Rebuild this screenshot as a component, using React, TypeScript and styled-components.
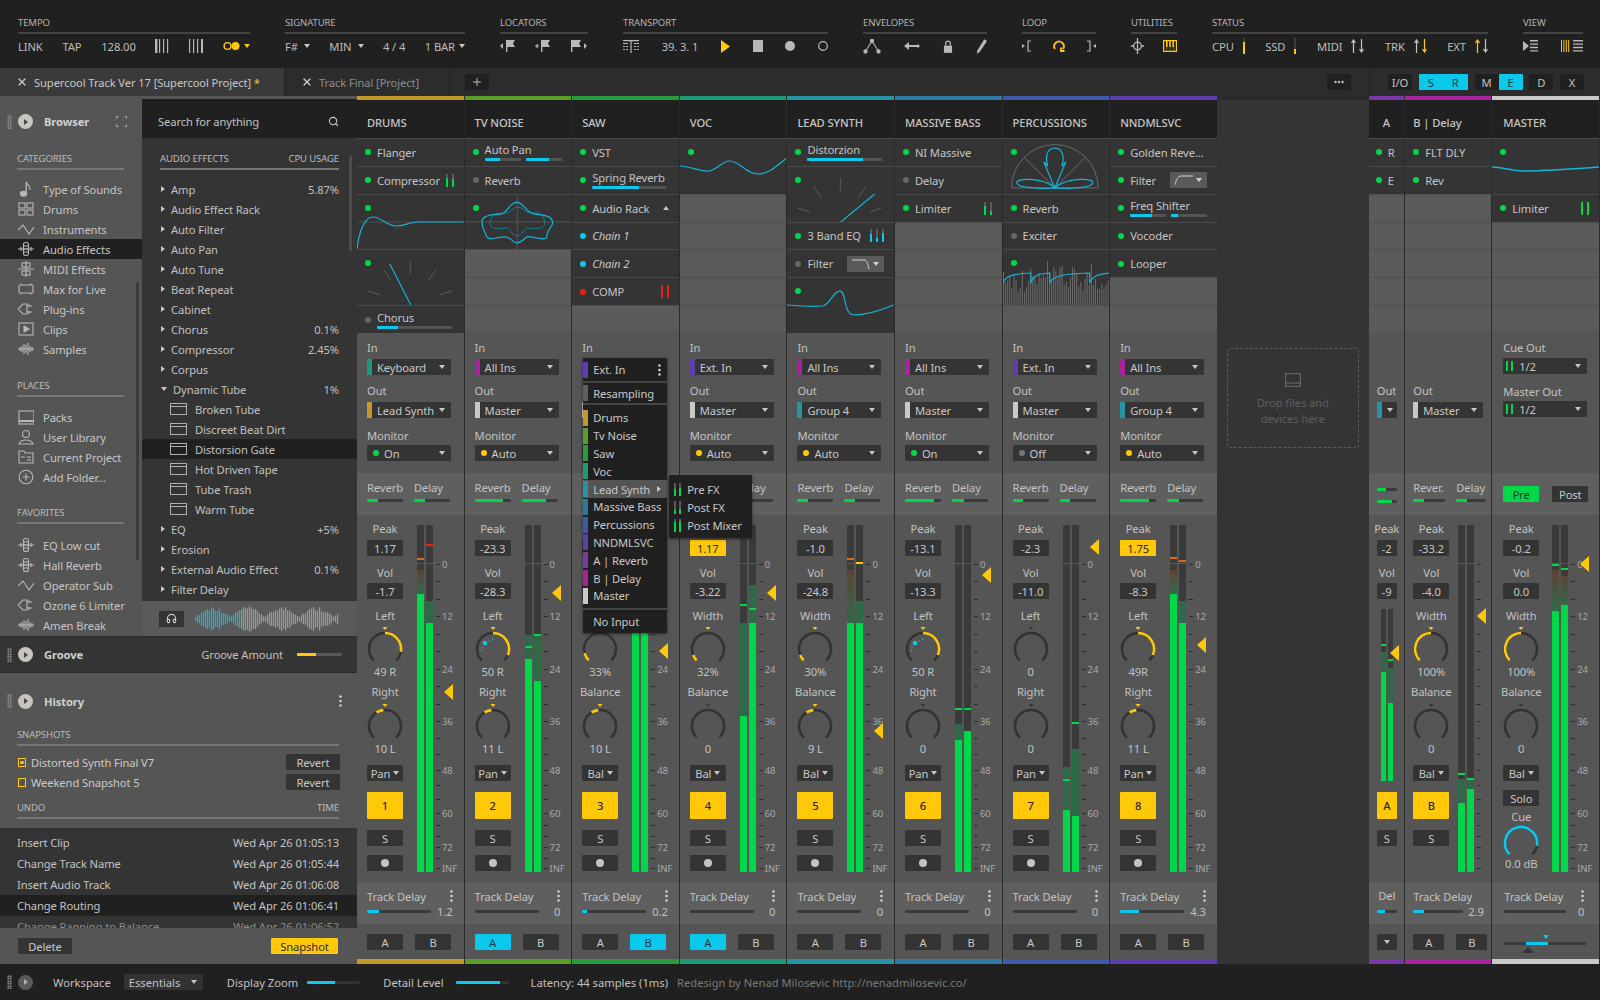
import React from "react";
import styled, { createGlobalStyle } from "styled-components";
import { Headphones, Search, X, Plus, Ellipsis } from "lucide-react";

const GREEN = "#00d84a";
const CYAN = "#0cc8ec";
const YELLOW = "#ffc90a";
const RED = "#f01d10";
const PANEL = "#555555";
const BAND = "#5f5f5f";
const DARK = "#343434";
const BLACK = "#202020";
const TEXT = "#c6c6c6";

const COLORS = {
  drums: "#c39a27",
  tv: "#5a9e2a",
  saw: "#2a9a3a",
  voc: "#1f9a78",
  lead: "#2595a3",
  massive: "#2e78a5",
  perc: "#3f5aa8",
  nnd: "#5c3faa",
  a: "#7b36a8",
  b: "#a8249c",
  master: "#c8c8c8",
};

const GlobalStyle = createGlobalStyle`
  html, body {
    margin: 0;
    padding: 0;
    background: ${BLACK};
  }
  * {
    box-sizing: border-box;
  }
  body {
    font-family: "Noto Sans", "Open Sans", sans-serif;
    font-size: 11.2px;
    letter-spacing: -0.1px;
    color: ${TEXT};
  }
`;

const Page = styled.div`
  width: 1600px;
  height: 1000px;
  display: flex;
  flex-direction: column;
  overflow: hidden;
  background: ${BLACK};
`;

/* top bar */

const TopBar = styled.div`
  height: 68px;
  padding: 16px 0 0 18px;
  display: flex;
  gap: 35px;
  background: ${BLACK};
`;

const Group = styled.div<{ $w: number }>`
  width: ${({ $w }) => $w}px;
`;

const GroupLabel = styled.div`
  height: 14px;
  line-height: 14px;
  font-size: 9.5px;
  color: #b4b4b4;
`;

const Rule = styled.div`
  height: 2px;
  margin-top: 2px;
  background: #444;
`;

const GroupRow = styled.div`
  height: 20px;
  margin-top: 2px;
  display: flex;
  align-items: center;
  justify-content: space-between;
  color: #bdbdbd;
`;

const Inline = styled.span<{ $gap?: number }>`
  display: inline-flex;
  align-items: center;
  gap: ${({ $gap }) => $gap ?? 6}px;
`;

const Caret = styled.i<{ $c?: string; $dir?: "up" | "right" }>`
  display: inline-block;
  flex: none;
  width: 0;
  height: 0;
  ${({ $dir, $c }) =>
    $dir === "right"
      ? `border-top: 3px solid transparent; border-bottom: 3px solid transparent; border-left: 4px solid ${$c ?? "#c6c6c6"};`
      : $dir === "up"
        ? `border-left: 3.5px solid transparent; border-right: 3.5px solid transparent; border-bottom: 4px solid ${$c ?? "#c6c6c6"};`
        : `border-left: 3.5px solid transparent; border-right: 3.5px solid transparent; border-top: 4px solid ${$c ?? "#c6c6c6"};`}
`;

const Ico = styled.svg<{ $c?: string }>`
  display: block;
  flex: none;
  color: ${({ $c }) => $c ?? "#b8b8b8"};
`;

const BarsIcon = ({ weights }: { weights: number[] }) => (
  <Ico width="14" height="14" viewBox="0 0 14 14" fill="currentColor">
    {weights.map((w, i) => (
      <rect key={i} x={i * 4} y="0" width={w} height="14" />
    ))}
  </Ico>
);

const Flag = ({ mode }: { mode: "prev" | "add" | "next" }) => (
  <Ico width="18" height="14" viewBox="0 0 18 14" fill="currentColor">
    {mode === "prev" && <path d="M3 4v6L0 7z" />}
    {mode === "add" && <path d="M0 6.4h4v1.2H0zM1.4 5h1.2v4H1.4z" />}
    <path d={mode === "next" ? "M1 1h1.4v12H1zM2.4 1H11L9 4.5 11 8H2.4z" : "M6 1h1.4v12H6zM7.4 1H15l-2 3.5L15 8H7.4z"} />
    {mode === "next" && <path d="M14 4v6l3-3z" />}
  </Ico>
);

const ArrowPair = ({ up, down }: { up: string; down: string }) => (
  <Inline $gap={3}>
    <Ico $c={up} width="5" height="14" viewBox="0 0 5 14" fill="none" stroke="currentColor" strokeWidth="1.2">
      <path d="M2.5 14V1M.5 4l2-3 2 3" />
    </Ico>
    <Ico $c={down} width="5" height="14" viewBox="0 0 5 14" fill="none" stroke="currentColor" strokeWidth="1.2">
      <path d="M2.5 0v13M.5 10l2 3 2-3" />
    </Ico>
  </Inline>
);

const LoadBar = styled.i<{ $fill: number }>`
  display: block;
  width: 2px;
  height: 16px;
  background: linear-gradient(to top, ${YELLOW} ${({ $fill }) => $fill}%, #3c3c3c ${({ $fill }) => $fill}%);
`;

const TopBarSection = () => (
  <TopBar>
    <Group $w={232}>
      <GroupLabel>TEMPO</GroupLabel>
      <Rule />
      <GroupRow>
        <span>LINK</span>
        <span>TAP</span>
        <span>128.00</span>
        <BarsIcon weights={[2.4, 1.2, 1.2, 1.2]} />
        <BarsIcon weights={[1.2, 1.2, 1.2, 2.4]} />
        <Inline $gap={4}>
          <Ico $c={YELLOW} width="17" height="10" viewBox="0 0 17 10">
            <circle cx="4.5" cy="5" r="3.4" fill="none" stroke="currentColor" strokeWidth="1.4" />
            <circle cx="12.5" cy="5" r="4" fill="currentColor" />
          </Ico>
          <Caret $c={YELLOW} />
        </Inline>
      </GroupRow>
    </Group>
    <Group $w={180}>
      <GroupLabel>SIGNATURE</GroupLabel>
      <Rule />
      <GroupRow>
        <Inline>F# <Caret /></Inline>
        <Inline>MIN <Caret /></Inline>
        <span>4 / 4</span>
        <Inline $gap={4}>1 BAR <Caret /></Inline>
      </GroupRow>
    </Group>
    <Group $w={88}>
      <GroupLabel>LOCATORS</GroupLabel>
      <Rule />
      <GroupRow>
        <Flag mode="prev" />
        <Flag mode="add" />
        <Flag mode="next" />
      </GroupRow>
    </Group>
    <Group $w={205}>
      <GroupLabel>TRANSPORT</GroupLabel>
      <Rule />
      <GroupRow>
        <Ico width="16" height="14" viewBox="0 0 16 14" fill="currentColor">
          <path d="M0 1h16v1.2H0zM7.4 2h1.2v12H7.4zM0 4h5v1H0zM11 4h5v1h-5zM0 7h2v1H0zM3 7h2v1H3zM11 7h2v1h-2zM14 7h2v1h-2zM0 10h2v1H0zM3 10h2v1H3zM11 10h2v1h-2zM14 10h2v1h-2z" />
        </Ico>
        <span>39. 3. 1</span>
        <Ico $c={YELLOW} width="9" height="13" viewBox="0 0 9 13" fill="currentColor">
          <path d="M0 0l9 6.5L0 13z" />
        </Ico>
        <Ico width="10" height="12" viewBox="0 0 10 12" fill="currentColor">
          <rect width="10" height="12" />
        </Ico>
        <Ico width="10" height="10" viewBox="0 0 10 10" fill="currentColor">
          <circle cx="5" cy="5" r="5" />
        </Ico>
        <Ico width="10" height="12" viewBox="0 0 10 12" fill="none" stroke="currentColor" strokeWidth="1.2">
          <circle cx="5" cy="6" r="4.3" />
        </Ico>
      </GroupRow>
    </Group>
    <Group $w={124}>
      <GroupLabel>ENVELOPES</GroupLabel>
      <Rule />
      <GroupRow>
        <Ico width="18" height="16" viewBox="0 0 18 16" fill="none" stroke="currentColor" strokeWidth="1.1">
          <path d="M2 14L9 3l7 11" />
          <circle cx="2.5" cy="13.5" r="1.6" fill="currentColor" />
          <circle cx="9" cy="3" r="1.6" fill="currentColor" />
          <circle cx="15.5" cy="13.5" r="1.6" fill="currentColor" />
        </Ico>
        <Ico width="16" height="12" viewBox="0 0 16 12" fill="currentColor">
          <path d="M0 6l5-4v3h8v2H5v3z" />
          <circle cx="14" cy="6" r="1.6" />
        </Ico>
        <Ico width="10" height="13" viewBox="0 0 11 14" fill="currentColor">
          <path d="M1 6h9v8H1z" />
          <path d="M3 6V3.5a2.5 2.5 0 0 1 5 0V6" fill="none" stroke="currentColor" strokeWidth="1.4" />
        </Ico>
        <Ico width="11" height="15" viewBox="0 0 12 16" fill="currentColor">
          <path d="M9 0l3 2-8 12-3 2 .3-3.5z" />
        </Ico>
      </GroupRow>
    </Group>
    <Group $w={74}>
      <GroupLabel>LOOP</GroupLabel>
      <Rule />
      <GroupRow>
        <Ico width="10" height="12" viewBox="0 0 10 12" fill="none" stroke="currentColor" strokeWidth="1.2">
          <path d="M0 4v4l3-2z" fill="currentColor" stroke="none" />
          <path d="M9 1H6v10h3" />
        </Ico>
        <Ico $c={YELLOW} width="14" height="13" viewBox="0 0 14 13" fill="none" stroke="currentColor" strokeWidth="1.8">
          <path d="M3 9A4.8 4.8 0 1 1 11 9M9 7.5V11h3.5" />
        </Ico>
        <Ico width="10" height="12" viewBox="0 0 10 12" fill="none" stroke="currentColor" strokeWidth="1.2">
          <path d="M10 4v4L7 6z" fill="currentColor" stroke="none" />
          <path d="M1 1h3v10H1" />
        </Ico>
      </GroupRow>
    </Group>
    <Group $w={46}>
      <GroupLabel>UTILITIES</GroupLabel>
      <Rule />
      <GroupRow>
        <Ico width="13" height="16" viewBox="0 0 13 16" fill="none" stroke="currentColor" strokeWidth="1.3">
          <path d="M6.5 0v16M0 8h3M10 8h3" />
          <circle cx="6.5" cy="8" r="3.8" />
        </Ico>
        <Ico $c={YELLOW} width="14" height="14" viewBox="0 0 14 14" fill="currentColor">
          <path d="M0 1h14v12H0zm1.2 1.2v9.6h11.6V2.200z" fillRule="evenodd" />
          <path d="M3 2h1.6v6H3zM6.200 2h1.600v6H6.200zM9.400 2h1.600v6H9.400zM3.700 8h.4v4h-.4zM6.800 8h.4v4h-.4zM10 8h.4v4H10z" />
        </Ico>
      </GroupRow>
    </Group>
    <Group $w={276}>
      <GroupLabel>STATUS</GroupLabel>
      <Rule />
      <GroupRow>
        <Inline $gap={9}>CPU <LoadBar $fill={75} /></Inline>
        <Inline $gap={9}>SSD <LoadBar $fill={30} /></Inline>
        <Inline $gap={9}>MIDI <ArrowPair up="#c6c6c6" down="#c6c6c6" /></Inline>
        <Inline $gap={9}>TRK <ArrowPair up="#c6c6c6" down={YELLOW} /></Inline>
        <Inline $gap={9}>EXT <ArrowPair up={YELLOW} down="#c6c6c6" /></Inline>
      </GroupRow>
    </Group>
    <Group $w={60}>
      <GroupLabel>VIEW</GroupLabel>
      <Rule />
      <GroupRow>
        <Ico width="15" height="12" viewBox="0 0 15 12" fill="currentColor">
          <path d="M0 1l6 5-6 5zM7 0h8v1.400H7zM7 3.400h8v1.400H7zM7 6.800h8v1.400H7zM7 10.200h8v1.400H7z" />
        </Ico>
        <Inline $gap={2}>
          <Ico $c={YELLOW} width="10" height="12" viewBox="0 0 10 12" fill="currentColor">
            <path d="M0 0h1v12H0zM2.400 0h1v12h-1zM4.800 0h1v12h-1zM7.200 0h1v12h-1z" />
          </Ico>
          <Ico width="10" height="12" viewBox="0 0 10 12" fill="currentColor">
            <path d="M0 0h10v1.400H0zM0 3.400h10v1.400H0zM0 6.800h10v1.400H0zM0 10.200h10v1.400H0z" />
          </Ico>
        </Inline>
      </GroupRow>
    </Group>
  </TopBar>
);

/* tabs */

const TabBar = styled.div`
  height: 28px;
  display: flex;
  align-items: stretch;
  background: #2c2c2c;
`;

const Tab = styled.div<{ $active?: boolean; $w: number }>`
  width: ${({ $w }) => $w}px;
  display: flex;
  align-items: center;
  gap: 6px;
  padding-left: 16px;
  border-right: 1px solid #222;
  background: ${({ $active }) => ($active ? "#3a3a3a" : "#2c2c2c")};
  color: ${({ $active }) => ($active ? "#c8c8c8" : "#8e8e8e")};
  white-space: nowrap;
`;

const TabStar = styled.span`
  color: ${YELLOW};
`;

const TabButton = styled.div<{ $on?: boolean; $w?: number }>`
  width: ${({ $w }) => $w ?? 24}px;
  height: 16px;
  display: flex;
  align-items: center;
  justify-content: center;
  background: ${({ $on }) => ($on ? CYAN : BLACK)};
  color: ${({ $on }) => ($on ? "#1d3a44" : "#c0c0c0")};
  border-radius: 1px;
`;

const TabSpacer = styled.div`
  flex: 1;
  display: flex;
  align-items: center;
  justify-content: flex-end;
  padding-right: 18px;
`;

const PlusWrap = styled.div`
  margin: 6px 0 0 15px;
`;

const ViewTabs = styled.div`
  width: 231px;
  padding: 0 16px 0 18px;
  display: flex;
  align-items: center;
  justify-content: space-between;
  border-left: 1px solid #222;
`;

const TwoUp = styled.div`
  width: 49px;
  height: 16px;
  display: flex;
  align-items: center;
  justify-content: space-around;
  background: ${CYAN};
  color: #1d3a44;
  border-radius: 1px;
`;

const Pair = styled.div`
  display: flex;
`;

const Tabs = () => (
  <TabBar>
    <Tab $active $w={285}>
      <X size={12} strokeWidth={2.4} color="#d0d0d0" />
      <span>
        Supercool Track Ver 17 [Supercool Project] <TabStar>*</TabStar>
      </span>
    </Tab>
    <Tab $w={165}>
      <X size={12} strokeWidth={2.4} color="#d0d0d0" />
      <span>Track Final [Project]</span>
    </Tab>
    <PlusWrap>
      <TabButton>
        <Plus size={12} />
      </TabButton>
    </PlusWrap>
    <TabSpacer>
      <TabButton>
        <Ellipsis size={12} strokeWidth={3} />
      </TabButton>
    </TabSpacer>
    <ViewTabs>
      <TabButton>I/O</TabButton>
      <TwoUp>
        <span>S</span>
        <span>R</span>
      </TwoUp>
      <Pair>
        <TabButton>M</TabButton>
        <TabButton $on>E</TabButton>
      </Pair>
      <TabButton>D</TabButton>
      <TabButton>X</TabButton>
    </ViewTabs>
  </TabBar>
);

/* sidebar */

const Main = styled.div`
  height: 868px;
  display: flex;
`;

const Sidebar = styled.div`
  width: 357px;
  flex: none;
  display: flex;
  flex-direction: column;
`;

const Browser = styled.div`
  height: 541px;
  display: flex;
  border-bottom: 1px solid #2a2a2a;
`;

const Categories = styled.div`
  width: 142px;
  flex: none;
  position: relative;
  background: ${PANEL};
`;

const PanelHead = styled.div<{ $h: number; $top?: number }>`
  height: ${({ $h }) => $h}px;
  display: flex;
  align-items: center;
  padding: ${({ $top }) => $top ?? 0}px 15px 0 7px;
  font-weight: 700;
  color: #d0d0d0;
`;

const Grip = styled.i`
  display: block;
  width: 5px;
  height: 14px;
  margin-right: 6px;
  background-image: radial-gradient(#8c8c8c 0.8px, transparent 1px);
  background-size: 2.5px 2.5px;
`;

const PlayDisc = styled.i<{ $dim?: boolean }>`
  width: 15px;
  height: 15px;
  margin-right: 11px;
  flex: none;
  display: flex;
  align-items: center;
  justify-content: center;
  border-radius: 50%;
  background: ${({ $dim }) => ($dim ? "#5a5a5a" : "#c8c4c0")};
  &::after {
    content: "";
    border-top: 3px solid transparent;
    border-bottom: 3px solid transparent;
    border-left: 4px solid ${({ $dim }) => ($dim ? "#b0b0b0" : "#444")};
    margin-left: 1px;
  }
`;

const PushRight = styled.div`
  margin-left: auto;
  display: flex;
  align-items: center;
  font-weight: 400;
`;

const SectionHead = styled.div<{ $mt: number; $x?: number; $r?: number }>`
  margin: ${({ $mt, $x, $r }) => `${$mt}px ${$r ?? 18}px 0 ${$x ?? 17}px`};
  height: 18px;
  display: flex;
  justify-content: space-between;
  align-items: flex-start;
  line-height: 14px;
  font-size: 9.5px;
  color: #bbb;
  border-bottom: 2px solid #777;
`;

const RowList = styled.div<{ $mt: number }>`
  margin-top: ${({ $mt }) => $mt}px;
`;

const CatRow = styled.div<{ $on?: boolean }>`
  height: 20px;
  display: flex;
  align-items: center;
  gap: 9px;
  padding-left: 18px;
  background: ${({ $on }) => ($on ? BLACK : "transparent")};
  color: #c6c6c6;
  white-space: nowrap;
`;

const SideScroll = styled.div`
  position: absolute;
  left: 136px;
  top: 186px;
  width: 3px;
  height: 278px;
  background: #3c3c3c;
  border-radius: 2px;
`;

const I16 = ({ children }: { children: React.ReactNode }) => (
  <Ico width="16" height="16" viewBox="0 0 16 16" fill="none" stroke="currentColor" strokeWidth="1.1">
    {children}
  </Ico>
);

const ICONS: Record<string, React.ReactNode> = {
  note: (
    <>
      <ellipse cx="5.500" cy="12.800" rx="3.200" ry="2.500" fill="currentColor" />
      <path d="M8.200 12V1c.6 3 4.500 3.500 3.800 8" strokeWidth="1.300" />
    </>
  ),
  grid: (
    <>
      <rect x="1" y="2" width="6" height="5" />
      <rect x="9" y="2" width="6" height="5" />
      <rect x="1" y="9" width="6" height="5" />
      <rect x="9" y="9" width="6" height="5" />
    </>
  ),
  wave: <path d="M0 9l5-5 6 9 5-7" />,
  fx: (
    <>
      <path d="M0 8h16M3 6v4M13 6v4" />
      <rect x="5.500" y="1.500" width="5" height="13" rx="2" />
      <path d="M5.500 5h5M5.500 8h5M5.500 11h5" />
    </>
  ),
  midi: (
    <>
      <path d="M0 8h16M8 0v16" />
      <rect x="4" y="2" width="8" height="4" />
      <rect x="4" y="10" width="8" height="4" />
    </>
  ),
  max: (
    <>
      <rect x="1" y="4" width="14" height="8" rx="1" />
      <path d="M3 4V2.500M13 4V2.500M3 12v1.500M13 12v1.500" />
    </>
  ),
  plug: <path d="M0 8l5-5h4v10H5zM9 5h5M9 11h5M11 3v3M11 10v3" />,
  clip: (
    <>
      <rect x="1" y="2" width="14" height="12" />
      <path d="M6 5l5 3-5 3z" fill="currentColor" />
    </>
  ),
  samples: <path d="M0 8h16M2 6v4M4 5v6M6 3v10M8 4v8M10 2v12M12 5v6M14 6v4" />,
  packs: (
    <>
      <rect x="1" y="2" width="15" height="13" />
      <path d="M1 12h15" strokeWidth="2" />
    </>
  ),
  user: (
    <>
      <circle cx="8" cy="5" r="3.500" />
      <path d="M1 15c1-3 3-4 7-4s6 1 7 4z" />
    </>
  ),
  folder: <path d="M1 2h5l1 2h8v10H1zM9 8h4M9 11h4M3 8h4" />,
  add: (
    <>
      <circle cx="8" cy="8" r="6.800" />
      <path d="M8 4.500v7M4.500 8h7" />
    </>
  ),
};

const CATS: [string, string][] = [
  ["note", "Type of Sounds"],
  ["grid", "Drums"],
  ["wave", "Instruments"],
  ["fx", "Audio Effects"],
  ["midi", "MIDI Effects"],
  ["max", "Max for Live"],
  ["plug", "Plug-ins"],
  ["clip", "Clips"],
  ["samples", "Samples"],
];
const PLACES: [string, string][] = [
  ["packs", "Packs"],
  ["user", "User Library"],
  ["folder", "Current Project"],
  ["add", "Add Folder..."],
];
const FAVS: [string, string][] = [
  ["fx", "EQ Low cut"],
  ["fx", "Hall Reverb"],
  ["wave", "Operator Sub"],
  ["plug", "Ozone 6 Limiter"],
  ["samples", "Amen Break"],
];

const ListPane = styled.div`
  width: 215px;
  flex: none;
  position: relative;
  display: flex;
  flex-direction: column;
  background: ${DARK};
`;

const SearchBox = styled.div`
  height: 42px;
  padding: 5px 18px 0 16px;
  display: flex;
  align-items: center;
  justify-content: space-between;
  border-top: 3px solid ${PANEL};
  background: ${BLACK};
  color: #c0c0c0;
`;

const ListRow = styled.div<{ $on?: boolean; $sub?: boolean }>`
  height: 20px;
  display: flex;
  align-items: center;
  padding: 0 18px 0 ${({ $sub }) => ($sub ? 28 : 19)}px;
  gap: ${({ $sub }) => ($sub ? 8 : 6)}px;
  background: ${({ $on }) => ($on ? BLACK : "transparent")};
  color: #c0c0c0;
  white-space: nowrap;
`;

const RowValue = styled.span`
  margin-left: auto;
`;

const ListScroll = styled.div`
  position: absolute;
  left: 207px;
  top: 59px;
  width: 3px;
  height: 96px;
  background: #4d4d4d;
  border-radius: 2px;
`;

const Preview = styled.div`
  margin-top: auto;
  height: 35px;
  display: flex;
  align-items: center;
  gap: 11px;
  padding-left: 17px;
  background: #5a5a5a;
`;

const PhoneBtn = styled.div`
  width: 25px;
  height: 16px;
  display: flex;
  align-items: center;
  justify-content: center;
  background: ${DARK};
  color: #ccc;
`;

const DEVICE_RANDOM = (i: number) => Math.abs(Math.sin(i * 12.9898) * 43758.5453) % 1;

const WaveForm = () => (
  <svg width="145" height="28" viewBox="0 0 145 28">
    {Array.from({ length: 72 }, (_, i) => {
      const env = 4 + 22 * Math.abs(Math.sin(i / 5.5)) * (0.55 + 0.45 * DEVICE_RANDOM(i));
      return (
        <rect key={i} x={i * 2} y={14 - env / 2} width="1.200" height={env} fill={i < 23 ? "#14b4d6" : "#9a9a9a"} />
      );
    })}
  </svg>
);

const GroovePanel = styled.div`
  height: 36px;
  display: flex;
  align-items: center;
  padding: 0 15px 0 7px;
  background: ${DARK};
  border-bottom: 1px solid #2a2a2a;
  font-weight: 700;
  color: #d0d0d0;
`;

const GrooveAmount = styled.span`
  margin-left: auto;
  margin-right: 14px;
  font-weight: 400;
  color: #c0c0c0;
`;

const Track = styled.div<{ $w: number; $h?: number; $bg?: string }>`
  width: ${({ $w }) => $w}px;
  height: ${({ $h }) => $h ?? 3}px;
  flex: none;
  background: ${({ $bg }) => $bg ?? "#3a3a3a"};
  border-radius: 1px;
  overflow: hidden;
`;

const TrackFill = styled.div<{ $pct: number; $c: string }>`
  width: ${({ $pct }) => $pct}%;
  height: 100%;
  background: ${({ $c }) => $c};
`;

const Bar = ({ w, pct, c, bg }: { w: number; pct: number; c: string; bg?: string }) => (
  <Track $w={w} $bg={bg}>
    <TrackFill $pct={pct} $c={c} />
  </Track>
);

const History = styled.div`
  flex: 1;
  display: flex;
  flex-direction: column;
  background: ${PANEL};
`;

const SnapRow = styled.div`
  height: 20px;
  padding: 0 17px 0 18px;
  display: flex;
  align-items: center;
  gap: 5px;
  color: #cacaca;
`;

const SnapCheck = styled.i<{ $on?: boolean }>`
  width: 8px;
  height: 9px;
  border: 1.500px solid ${YELLOW};
  background: ${({ $on }) => ($on ? `radial-gradient(circle, ${YELLOW} 1.5px, transparent 2px)` : "none")};
`;

const FlatBtn = styled.button<{ $w: number; $hot?: boolean }>`
  width: ${({ $w }) => $w}px;
  height: 16px;
  padding: 0;
  border: none;
  border-radius: 1px;
  font: inherit;
  letter-spacing: inherit;
  background: ${({ $hot }) => ($hot ? YELLOW : DARK)};
  color: ${({ $hot }) => ($hot ? "#2a2a2a" : "#c8c8c8")};
`;

const UndoList = styled.div`
  height: 100px;
  margin-top: 0;
  padding-top: 4px;
  overflow: hidden;
  background: ${DARK};
`;

const UndoRow = styled.div<{ $on?: boolean; $fade?: boolean }>`
  height: 21px;
  padding: 0 18px 0 17px;
  display: flex;
  align-items: center;
  justify-content: space-between;
  background: ${({ $on }) => ($on ? BLACK : "transparent")};
  color: ${({ $fade }) => ($fade ? "#8a8a8a" : "#c4c4c4")};
  white-space: nowrap;
`;

const HistoryFoot = styled.div`
  flex: 1;
  display: flex;
  align-items: center;
  justify-content: space-between;
  padding: 0 19px 0 18px;
`;

const VDots = ({ c }: { c?: string }) => (
  <Ico $c={c ?? "#d0d0d0"} width="3" height="12" viewBox="0 0 3 12" fill="currentColor">
    <circle cx="1.500" cy="1.500" r="1.300" />
    <circle cx="1.500" cy="6" r="1.300" />
    <circle cx="1.500" cy="10.500" r="1.300" />
  </Ico>
);

const TubeIcon = () => (
  <Ico $c="#b0b0b0" width="17" height="12" viewBox="0 0 17 12" fill="none" stroke="currentColor" strokeWidth="1">
    <rect x=".5" y=".5" width="16" height="11" />
    <path d="M.5 3.500h16" />
  </Ico>
);

const BROWSER_ROWS: { name: string; val?: string; open?: boolean }[] = [
  { name: "Amp", val: "5.87%" },
  { name: "Audio Effect Rack" },
  { name: "Auto Filter" },
  { name: "Auto Pan" },
  { name: "Auto Tune" },
  { name: "Beat Repeat" },
  { name: "Cabinet" },
  { name: "Chorus", val: "0.1%" },
  { name: "Compressor", val: "2.45%" },
  { name: "Corpus" },
  { name: "Dynamic Tube", val: "1%", open: true },
];
const TUBES = ["Broken Tube", "Discreet Beat Dirt", "Distorsion Gate", "Hot Driven Tape", "Tube Trash", "Warm Tube"];
const BROWSER_TAIL: { name: string; val?: string }[] = [
  { name: "EQ", val: "+5%" },
  { name: "Erosion" },
  { name: "External Audio Effect", val: "0.1%" },
  { name: "Filter Delay" },
];

const UNDO: [string, string][] = [
  ["Insert Clip", "Wed Apr 26 01:05:13"],
  ["Change Track Name", "Wed Apr 26 01:05:44"],
  ["Insert Audio Track", "Wed Apr 26 01:06:08"],
  ["Change Routing", "Wed Apr 26 01:06:41"],
  ["Change Panning to Balance", "Wed Apr 26 01:06:52"],
];

const CatList = ({ rows, mt, active }: { rows: [string, string][]; mt: number; active?: string }) => (
  <RowList $mt={mt}>
    {rows.map(([icon, name]) => (
      <CatRow key={name} $on={name === active}>
        <I16>{ICONS[icon]}</I16>
        {name}
      </CatRow>
    ))}
  </RowList>
);

const SidebarSection = () => (
  <Sidebar>
    <Browser>
      <Categories>
        <PanelHead $h={42} $top={9}>
          <Grip />
          <PlayDisc />
          Browser
          <PushRight>
            <Ico $c="#c8c8c8" width="11" height="11" viewBox="0 0 11 11" fill="none" stroke="currentColor" strokeWidth="1.200">
              <path d="M0 3V0h3M8 0h3v3M11 8v3H8M3 11H0V8" />
            </Ico>
          </PushRight>
        </PanelHead>
        <SectionHead $mt={14}>CATEGORIES</SectionHead>
        <CatList rows={CATS} mt={9} active="Audio Effects" />
        <SectionHead $mt={20}>PLACES</SectionHead>
        <CatList rows={PLACES} mt={10} />
        <SectionHead $mt={19}>FAVORITES</SectionHead>
        <CatList rows={FAVS} mt={11} />
        <SideScroll />
      </Categories>
      <ListPane>
        <SearchBox>
          Search for anything
          <Search size={11} strokeWidth={2.200} color="#d0d0d0" />
        </SearchBox>
        <SectionHead $mt={14} $x={18}>
          <span>AUDIO EFFECTS</span>
          <span>CPU USAGE</span>
        </SectionHead>
        <RowList $mt={9}>
          {BROWSER_ROWS.map(r => (
            <ListRow key={r.name}>
              {r.open ? <Caret /> : <Caret $dir="right" />}
              {r.name}
              {r.val && <RowValue>{r.val}</RowValue>}
            </ListRow>
          ))}
          {TUBES.map(t => (
            <ListRow key={t} $sub $on={t === "Distorsion Gate"}>
              <TubeIcon />
              {t}
            </ListRow>
          ))}
          {BROWSER_TAIL.map(r => (
            <ListRow key={r.name}>
              <Caret $dir="right" />
              {r.name}
              {r.val && <RowValue>{r.val}</RowValue>}
            </ListRow>
          ))}
        </RowList>
        <Preview>
          <PhoneBtn>
            <Headphones size={11} strokeWidth={2.400} />
          </PhoneBtn>
          <WaveForm />
        </Preview>
        <ListScroll />
      </ListPane>
    </Browser>
    <GroovePanel>
      <Grip />
      <PlayDisc />
      Groove
      <GrooveAmount>Groove Amount</GrooveAmount>
      <Bar w={45} pct={42} c={YELLOW} bg="#5a5a5a" />
    </GroovePanel>
    <History>
      <PanelHead $h={56}>
        <Grip />
        <PlayDisc />
        History
        <PushRight>
          <VDots />
        </PushRight>
      </PanelHead>
      <SectionHead $mt={-1}>SNAPSHOTS</SectionHead>
      <RowList $mt={6}>
        <SnapRow>
          <SnapCheck $on />
          Distorted Synth Final V7
          <PushRight>
            <FlatBtn $w={54}>Revert</FlatBtn>
          </PushRight>
        </SnapRow>
        <SnapRow>
          <SnapCheck />
          Weekend Snapshot 5
          <PushRight>
            <FlatBtn $w={54}>Revert</FlatBtn>
          </PushRight>
        </SnapRow>
      </RowList>
      <SectionHead $mt={9}>
        <span>UNDO</span>
        <span>TIME</span>
      </SectionHead>
      <RowList $mt={9}>
        <UndoList>
          {UNDO.map(([a, b], i) => (
            <UndoRow key={a} $on={i === 3} $fade={i === 4}>
              <span>{a}</span>
              <span>{b}</span>
            </UndoRow>
          ))}
        </UndoList>
      </RowList>
      <HistoryFoot>
        <FlatBtn $w={54}>Delete</FlatBtn>
        <FlatBtn $w={67} $hot>
          Snapshot
        </FlatBtn>
      </HistoryFoot>
    </History>
  </Sidebar>
);

/* device graphs */

const GRAPH_LINE = "#14b4d6";

const Dial = ({ x, y }: { x: number; y: number }) => (
  <svg width="107" height="56" viewBox="0 0 107 56" fill="none" stroke="#5c5c5c" strokeWidth="1">
    <path d="M10.500 41L23 45M27 20l7 10M53.500 11v13M79 20l-7 10M95 41l-12 4" />
    <path d={`M54 55L${x} ${y}`} stroke={GRAPH_LINE} strokeWidth="1.200" />
  </svg>
);

const Spectrum = () => (
  <svg width="107" height="56" viewBox="0 0 107 56" fill="none">
    {Array.from({ length: 52 }, (_, i) => {
      const h = 14 + 36 * DEVICE_RANDOM(i + 3) * (i % 7 === 0 ? 1 : 0.7);
      return <rect key={i} x={i * 2.1} y={56 - h} width="1" height={h} fill="#6d6d6d" />;
    })}
    <path d="M0 34C2 26 8 24 28 23V33C30 26 34 24 47 23V33C50 26 58 24 87 23V33C90 26 96 24 107 23" stroke={GRAPH_LINE} strokeWidth="1.200" />
  </svg>
);

const GRAPHS: Record<string, React.ReactNode> = {
  eqCurve: (
    <svg width="107" height="56" viewBox="0 0 107 56" fill="none">
      <path d="M0 27h107" stroke="#4d4d4d" />
      <path d="M0 54C2 36 8 22 16 22C24 22 30 31 39 31C48 31 52 27 62 27L107 27" stroke={GRAPH_LINE} strokeWidth="1.200" />
    </svg>
  ),
  dialLeft: <Dial x={33} y={14} />,
  dialRight: <Dial x={88} y={27} />,
  blob: (
    <svg width="107" height="56" viewBox="0 0 107 56" fill="none">
      <path d="M0 27h107M52.500 0v55" stroke="#555" />
      <path d="M25 28C25 22 30 17 42 18C46 17 48 12 53 12C58 12 60 17 66 18C76 16 80 22 80 28C80 34 72 34 62 33C58 36 56 41 52 41C48 41 46 35 42 33C32 34 25 34 25 28Z" stroke="#137f99" strokeWidth="1" />
      <path d="M17 27C17 22 24 19 36 19C42 19 44 8 52 7C60 8 62 19 70 19C82 20 88 22 88 28C88 32 82 34 82 43C76 46 66 40 62 42C58 45 56 48 52 48C48 48 46 42 40 42C32 42 24 46 22 42C20 36 17 34 17 27Z" stroke={GRAPH_LINE} strokeWidth="1.200" />
    </svg>
  ),
  voc: (
    <svg width="107" height="56" viewBox="0 0 107 56" fill="none">
      <path d="M0 27C10 27 20 33 29 32C37 31 42 22 50 22C60 22 66 35 78 35C90 35 98 26 107 19" stroke={GRAPH_LINE} strokeWidth="1.200" />
    </svg>
  ),
  lead: (
    <svg width="107" height="56" viewBox="0 0 107 56" fill="none">
      <path d="M0 27C12 28 26 29 36 28C44 26 46 13 53 13C60 13 56 36 67 37C78 37 95 32 107 27" stroke={GRAPH_LINE} strokeWidth="1.200" />
    </svg>
  ),
  polar: (
    <svg width="107" height="56" viewBox="0 0 107 56" fill="none">
      <path d="M8.500 49A43.500 43.500 0 0 1 95.500 49Z M52 49L21 18M52 49L83 18" stroke="#6a6a6a" strokeWidth="1" />
      <path d="M52 49C40 38 12 39 14 44C14 49 40 50 52 49ZM52 49C64 38 92 39 90 44C90 49 64 50 52 49ZM52 49L41 23L45 27C42 18 44 9 52 9C60 9 62 18 59 27L63 23Z" stroke={GRAPH_LINE} strokeWidth="1.200" />
    </svg>
  ),
  spectrum: <Spectrum />,
  master: (
    <svg width="107" height="56" viewBox="0 0 107 56" fill="none">
      <path d="M0 28C10 28 20 32 29 32C50 32 80 30 107 28" stroke={GRAPH_LINE} strokeWidth="1.600" />
    </svg>
  ),
};

/* devices */

const DeviceGrid = styled.div`
  height: 195px;
  display: grid;
  grid-template-rows: repeat(7, 1fr);
  background: #5a5a5a;
`;

const DeviceCell = styled.div<{ $span?: number; $empty?: boolean; $pad?: number }>`
  grid-row: span ${({ $span }) => $span ?? 1};
  min-height: 0;
  position: relative;
  display: flex;
  align-items: center;
  gap: 6px;
  padding-left: ${({ $pad }) => $pad ?? 8}px;
  overflow: hidden;
  white-space: nowrap;
  border-top: 1px solid ${({ $empty }) => ($empty ? "#4e4e4e" : "#4a4a4a")};
  background: ${({ $empty }) => ($empty ? "#5a5a5a" : DARK)};
  color: #c4c4c4;
`;

const GraphCell = styled(DeviceCell)`
  padding-left: 0;
  align-items: flex-start;
`;

const Dot = styled.i<{ $c: string }>`
  width: 6px;
  height: 6px;
  flex: none;
  border-radius: 50%;
  background: ${({ $c }) => $c};
`;

const GraphDot = styled(Dot)`
  position: absolute;
  left: 8px;
  top: 10px;
`;

const ParamCol = styled.div`
  display: flex;
  flex-direction: column;
  gap: 1px;
  line-height: 14px;
`;

const ParamBars = styled.div`
  display: flex;
  gap: 5px;
`;

const RowEnd = styled.div<{ $flush?: boolean }>`
  margin-left: auto;
  padding-right: ${({ $flush }) => ($flush ? 0 : 10)}px;
  display: flex;
  align-items: center;
`;

const MiniWrap = styled.div`
  display: flex;
  gap: 4px;
`;

const MiniBar = styled.i<{ $fill: number; $c: string; $w?: number }>`
  display: block;
  width: ${({ $w }) => $w ?? 2}px;
  height: 13px;
  background: linear-gradient(to top, ${({ $c }) => $c} ${({ $fill }) => $fill}%, #5a5a5a ${({ $fill }) => $fill}%);
`;

const FilterBox = styled.div`
  width: 37px;
  height: 16px;
  display: flex;
  align-items: center;
  justify-content: center;
  gap: 3px;
  background: #5a5a5a;
  border-radius: 1px;
`;

type Device =
  | { graph: string; dot?: string }
  | {
      name: string;
      dot?: string;
      italic?: boolean;
      mini?: [number, number] | [number, number, number];
      miniColor?: string;
      filter?: "low" | "high";
      up?: boolean;
      bars?: number[];
      barW?: number;
    };

const DOT_ON = GREEN;
const DOT_OFF = "#666";

const DeviceView = ({ d, pad }: { d: Device; pad?: number }) => {
  if ("graph" in d) {
    return (
      <GraphCell $span={2}>
        {GRAPHS[d.graph]}
        <GraphDot $c={d.dot ?? DOT_ON} />
      </GraphCell>
    );
  }
  const body = d.bars ? (
    <ParamCol>
      <span>{d.name}</span>
      <ParamBars>
        {d.bars.map((b, i) => (
          <Bar key={i} w={d.barW ?? 36} pct={b} c={CYAN} bg="#555" />
        ))}
      </ParamBars>
    </ParamCol>
  ) : d.italic ? (
    <em>{d.name}</em>
  ) : (
    <span>{d.name}</span>
  );
  return (
    <DeviceCell $pad={pad}>
      <Dot $c={d.dot ?? DOT_ON} />
      {body}
      {d.mini && (
        <RowEnd>
          <MiniWrap>
            {d.mini.map((m, i) => (
              <MiniBar key={i} $fill={m} $c={d.miniColor ?? GREEN} />
            ))}
          </MiniWrap>
        </RowEnd>
      )}
      {d.up && (
        <RowEnd>
          <Caret $dir="up" />
        </RowEnd>
      )}
      {d.filter && (
        <RowEnd>
          <FilterBox>
            <Ico $c="#d0d0d0" width="18" height="10" viewBox="0 0 18 10" fill="none" stroke="currentColor" strokeWidth="1">
              <path d={d.filter === "low" ? "M0 1h12c3 0 4 4 5 9" : "M0 10C1 5 3 1 6 1h12"} />
            </Ico>
            <Caret $c="#d0d0d0" />
          </FilterBox>
        </RowEnd>
      )}
    </DeviceCell>
  );
};

/* channel parts */

const ChannelBox = styled.div<{ $w: number }>`
  width: ${({ $w }) => $w}px;
  flex: none;
  position: relative;
  display: flex;
  flex-direction: column;
  background: ${PANEL};
`;

const Strip = styled.div<{ $c: string; $h: number }>`
  height: ${({ $h }) => $h}px;
  flex: none;
  background: ${({ $c }) => $c};
`;

const Header = styled.div<{ $pad: number }>`
  height: 38px;
  display: flex;
  align-items: center;
  padding: 6px 0 0 ${({ $pad }) => $pad}px;
  background: ${BLACK};
  font-weight: 500;
  color: #c6c6c6;
  white-space: nowrap;
`;

const Routing = styled.div<{ $pad: number }>`
  height: 140px;
  padding-left: ${({ $pad }) => $pad}px;
  padding-top: 8px;
`;

const SmallLabel = styled.div<{ $mt?: number; $center?: boolean; $w?: number }>`
  height: 14px;
  line-height: 14px;
  margin-top: ${({ $mt }) => $mt ?? 0}px;
  width: ${({ $w }) => ($w ? `${$w}px` : "auto")};
  text-align: ${({ $center }) => ($center ? "center" : "left")};
  color: #c2c2c2;
  white-space: nowrap;
`;

const Select = styled.div<{ $mt: number; $w: number }>`
  width: ${({ $w }) => $w}px;
  height: 16px;
  margin-top: ${({ $mt }) => $mt}px;
  display: flex;
  align-items: center;
  padding-right: 6px;
  background: ${DARK};
  border-radius: 1px;
  color: #c8c8c8;
  white-space: nowrap;
`;

const ColorTag = styled.i<{ $c: string }>`
  width: 5px;
  height: 16px;
  flex: none;
  margin-right: 5px;
  background: ${({ $c }) => $c};
`;

const SelectDot = styled(Dot)`
  margin: 0 5px 0 6px;
`;

const SelectEnd = styled.span`
  margin-left: auto;
  display: flex;
`;

const GreenPair = styled.span`
  display: flex;
  gap: 3px;
  margin: 0 6px 0 3px;
  & i {
    display: block;
    width: 2px;
    height: 10px;
    background: ${GREEN};
  }
`;

const Sends = styled.div<{ $pad: number }>`
  height: 42px;
  padding: 8px 0 0 ${({ $pad }) => $pad}px;
  display: flex;
  gap: 11px;
  background: ${BAND};
`;

const SendCol = styled.div`
  display: flex;
  flex-direction: column;
  gap: 4px;
`;

const StackedSends = styled.div`
  display: flex;
  flex-direction: column;
  gap: 9px;
  padding-top: 7px;
`;

const PrePost = styled.button<{ $on?: boolean }>`
  width: 36px;
  height: 16px;
  margin-top: 5px;
  padding: 0;
  border: none;
  font: inherit;
  letter-spacing: inherit;
  background: ${({ $on }) => ($on ? GREEN : DARK)};
  color: ${({ $on }) => ($on ? "#1d3a25" : "#c8c8c8")};
`;

const MasterSends = styled.div`
  display: flex;
  gap: 13px;
`;

const Levels = styled.div<{ $pad: number; $gap: number }>`
  height: 367px;
  display: flex;
  padding: 0 0 0 ${({ $pad }) => $pad}px;
  gap: ${({ $gap }) => $gap}px;
`;

const Controls = styled.div<{ $w: number }>`
  width: ${({ $w }) => $w}px;
  flex: none;
  padding-top: 7px;
  display: flex;
  flex-direction: column;
  align-items: center;
`;

const ValueBox = styled.div<{ $mt: number; $hot?: boolean; $h?: number }>`
  width: 100%;
  height: ${({ $h }) => $h ?? 16}px;
  margin-top: ${({ $mt }) => $mt}px;
  display: flex;
  align-items: center;
  justify-content: center;
  flex: none;
  background: ${({ $hot }) => ($hot ? YELLOW : DARK)};
  color: ${({ $hot }) => ($hot ? "#2a2a2a" : "#c8c8c8")};
  border-radius: 1px;
`;

const NumBox = styled(ValueBox)`
  background: ${YELLOW};
  color: #2a2a2a;
  font-weight: 500;
`;

const RecDisc = styled.i`
  display: block;
  width: 8px;
  height: 8px;
  border-radius: 50%;
  background: #c4c4c4;
`;

const SmallCaretGap = styled.span`
  display: inline-flex;
  align-items: center;
  gap: 3px;
`;

const KnobSvg = styled.svg<{ $mt: number }>`
  display: block;
  flex: none;
  margin-top: ${({ $mt }) => $mt}px;
`;

const polar = (deg: number, r: number, cx = 18, cy = 25) => {
  const a = ((deg - 90) * Math.PI) / 180;
  return [cx + r * Math.cos(a), cy + r * Math.sin(a)];
};

const arcPath = (from: number, to: number, r = 16) => {
  const [x1, y1] = polar(from, r);
  const [x2, y2] = polar(to, r);
  const large = to - from > 180 ? 1 : 0;
  return `M${x1.toFixed(2)} ${y1.toFixed(2)}A${r} ${r} 0 ${large} 1 ${x2.toFixed(2)} ${y2.toFixed(2)}`;
};

type KnobArc = [number, number] | null;

const Knob = ({ arc, mt, dot, color = YELLOW }: { arc: KnobArc; mt: number; dot?: boolean; color?: string }) => (
  <KnobSvg $mt={mt} width="36" height="44" viewBox="0 0 36 44" fill="none">
    <path d={arcPath(-135, 135)} stroke="#333" strokeWidth="2.600" />
    {arc && <path d={arcPath(arc[0], arc[1])} stroke={color} strokeWidth="2.600" />}
    {color === YELLOW && <path d="M15.500 3h5L18 6z" fill={arc ? YELLOW : "#3a3a3a"} />}
    {dot && (
      <>
        <circle cx="10" cy="19" r="2.300" fill={CYAN} />
        <path d="M14 17h1.500M17 15h1.500M7 23v1.400M6.500 26v1.400" stroke={CYAN} />
      </>
    )}
  </KnobSvg>
);

const MeterGroup = styled.div`
  display: flex;
  gap: 3px;
`;

const MeterWrap = styled.div<{ $mt?: number; $h: number }>`
  height: ${({ $h }) => $h}px;
  margin-top: ${({ $mt }) => $mt ?? 10}px;
  display: flex;
  gap: 2px;
  flex: none;
`;

const MeterTrack = styled.div<{ $w: number }>`
  width: ${({ $w }) => $w}px;
  position: relative;
  background: #3a3a3a;
  overflow: hidden;
`;

const MeterFill = styled.div<{ $top: number }>`
  position: absolute;
  left: 0;
  right: 0;
  bottom: 0;
  top: ${({ $top }) => $top}px;
  background: ${GREEN};
`;

const MeterDim = styled.div<{ $top: number; $h: number; $warm?: boolean }>`
  position: absolute;
  left: 0;
  right: 0;
  top: ${({ $top }) => $top}px;
  height: ${({ $h }) => $h}px;
  background: ${({ $warm }) => ($warm ? "linear-gradient(#5c4434, #33694a)" : "#2f6a48")};
`;

const MeterHold = styled.div<{ $top: number; $c: string }>`
  position: absolute;
  left: 0;
  right: 0;
  top: ${({ $top }) => $top}px;
  height: 1.500px;
  background: ${({ $c }) => $c};
`;

const MeterNotch = styled.div<{ $top: number }>`
  position: absolute;
  left: 0;
  right: 0;
  top: ${({ $top }) => $top}px;
  height: 1px;
  background: #5a5a5a;
`;

type MeterData = { fill: number; dim?: number; warm?: boolean; hold?: number; holdC?: string };

const Meter = ({ bars, top, h, w = 7, mt }: { bars: MeterData[]; top: number; h: number; w?: number; mt?: number }) => (
  <MeterWrap $h={h} $mt={mt}>
    {bars.map((b, i) => (
      <MeterTrack key={i} $w={w}>
        {b.dim !== undefined && <MeterDim $top={b.dim - top} $h={b.fill - b.dim} $warm={b.warm} />}
        <MeterFill $top={b.fill - top} />
        {top < 563 && <MeterNotch $top={563 - top} />}
        {b.hold !== undefined && <MeterHold $top={b.hold - top} $c={b.holdC ?? GREEN} />}
      </MeterTrack>
    ))}
  </MeterWrap>
);

const ScaleCol = styled.div<{ $w: number }>`
  position: relative;
  width: ${({ $w }) => $w}px;
  flex: none;
  margin-top: 10px;
  display: flex;
  flex-direction: column;
`;

const Tick = styled.div<{ $mt: number }>`
  height: 1px;
  margin-top: ${({ $mt }) => $mt}px;
  display: flex;
  align-items: center;
  gap: 2px;
  font-size: 9.500px;
  color: #aaa;
  &::before {
    content: "";
    width: 4px;
    height: 1px;
    flex: none;
    background: #2c2c2c;
  }
`;

const FaderArrow = styled.i<{ $top: number; $left: number }>`
  position: absolute;
  top: ${({ $top }) => $top - 8}px;
  left: ${({ $left }) => $left}px;
  width: 0;
  height: 0;
  border-top: 8px solid transparent;
  border-bottom: 8px solid transparent;
  border-right: 9px solid ${YELLOW};
`;

const TICKS: [number, string?][] = [
  [564, "0"], [581], [599], [616, "12"], [634], [651], [669, "24"], [686], [704], [721, "36"], [738],
  [754], [770, "48"], [785], [799], [813, "60"], [825], [836], [847, "72"], [858], [868, "INF"],
];

const Scale = ({ arrow, left = 8, labels = true }: { arrow: number; left?: number; labels?: boolean }) => (
  <ScaleCol $w={labels ? 28 : 10}>
    {TICKS.map(([y, label], i) => (
      <Tick key={y} $mt={i === 0 ? y - 525 : y - TICKS[i - 1][0] - 1}>
        {labels && label}
      </Tick>
    ))}
    <FaderArrow $top={arrow - 525} $left={left} />
  </ScaleCol>
);

const DelayBand = styled.div<{ $pad: number; $r: number }>`
  height: 42px;
  padding: 7px ${({ $r }) => $r}px 0 ${({ $pad }) => $pad}px;
  background: ${BAND};
`;

const DelayHead = styled.div`
  height: 14px;
  display: flex;
  align-items: center;
  justify-content: space-between;
  color: #c2c2c2;
`;

const DelayBarRow = styled.div`
  height: 16px;
  display: flex;
  align-items: center;
  justify-content: space-between;
  color: #c2c2c2;
`;

const ABRow = styled.div<{ $pad: number }>`
  height: 35px;
  padding: 10px 0 0 ${({ $pad }) => $pad}px;
  display: flex;
  gap: 12px;
`;

const ABBtn = styled.div<{ $on?: boolean; $w?: number }>`
  width: ${({ $w }) => $w ?? 36}px;
  height: 16px;
  display: flex;
  align-items: center;
  justify-content: center;
  background: ${({ $on }) => ($on ? CYAN : DARK)};
  color: ${({ $on }) => ($on ? "#1d3a44" : "#c8c8c8")};
  border-radius: 1px;
`;

const CrossFader = styled.div`
  position: relative;
  width: 82px;
  height: 3px;
  margin: 8px 0 0 1px;
  background: #3a3a3a;
`;

const CrossSpan = styled.div`
  position: absolute;
  left: 22px;
  top: 0;
  width: 22px;
  height: 3px;
  background: ${CYAN};
`;

const CrossTop = styled.i`
  position: absolute;
  left: 39px;
  top: -7px;
  border-left: 3px solid transparent;
  border-right: 3px solid transparent;
  border-top: 4px solid ${CYAN};
`;

const CrossBottom = styled.i`
  position: absolute;
  left: 18px;
  top: 5px;
  border-left: 6px solid transparent;
  border-right: 6px solid transparent;
  border-bottom: 6px solid #333;
`;

/* routing menu */

const Menu = styled.div`
  position: absolute;
  left: 11px;
  top: 262px;
  width: 84px;
  height: 275px;
  z-index: 5;
  display: flex;
  flex-direction: column;
  background: ${BLACK};
  box-shadow: 0 1px 3px rgba(0, 0, 0, 0.5);
`;

const MenuRow = styled.div<{ $h: number; $on?: boolean }>`
  height: ${({ $h }) => $h}px;
  flex: none;
  display: flex;
  align-items: center;
  padding-right: 6px;
  background: ${({ $on }) => ($on ? PANEL : "transparent")};
  color: #c8c8c8;
  white-space: nowrap;
`;

const MenuTag = styled.i<{ $c?: string }>`
  width: 5px;
  height: 16px;
  flex: none;
  margin-right: 5px;
  background: ${({ $c }) => $c ?? "transparent"};
`;

const MenuSep = styled.div<{ $mb?: number; $mt?: number }>`
  height: 2px;
  flex: none;
  margin: ${({ $mt }) => $mt ?? 0}px 0 ${({ $mb }) => $mb ?? 0}px;
  background: #444;
`;

const SubMenu = styled.div`
  position: absolute;
  left: 86px;
  top: 117px;
  width: 83px;
  height: 63px;
  padding: 5px 0 0 5px;
  background: ${BLACK};
  box-shadow: 0 1px 3px rgba(0, 0, 0, 0.5);
`;

const SubRow = styled.div`
  height: 18px;
  display: flex;
  align-items: center;
  gap: 6px;
  color: #c8c8c8;
`;

const SubMini = styled.span`
  display: flex;
  gap: 3px;
`;

const RoutingMenu = () => (
  <Menu>
    <MenuRow $h={23}>
      <MenuTag $c={COLORS.nnd} />
      Ext. In
      <RowEnd $flush>
        <VDots />
      </RowEnd>
    </MenuRow>
    <MenuSep />
    <MenuRow $h={20}>
      <MenuTag $c="#5f5f5f" />
      Resampling
    </MenuRow>
    <MenuSep $mb={4} />
    {[
      ["Drums", COLORS.drums],
      ["Tv Noise", COLORS.tv],
      ["Saw", COLORS.saw],
      ["Voc", COLORS.voc],
      ["Lead Synth", COLORS.lead],
      ["Massive Bass", COLORS.massive],
      ["Percussions", COLORS.perc],
      ["NNDMLSVC", COLORS.nnd],
      ["A | Reverb", COLORS.a],
      ["B | Delay", COLORS.b],
      ["Master", COLORS.master],
    ].map(([name, c]) => (
      <MenuRow key={name} $h={17.800} $on={name === "Lead Synth"}>
        <MenuTag $c={c} />
        {name}
        {name === "Lead Synth" && (
          <RowEnd $flush>
            <Caret $dir="right" />
          </RowEnd>
        )}
      </MenuRow>
    ))}
    <MenuSep $mt={3} />
    <MenuRow $h={24}>
      <MenuTag />
      No Input
    </MenuRow>
    <SubMenu>
      {[
        ["Pre FX", 55],
        ["Post FX", 30],
        ["Post Mixer", 75],
      ].map(([name, fill]) => (
        <SubRow key={name}>
          <SubMini>
            <MiniBar $fill={fill as number} $c={GREEN} />
            <MiniBar $fill={(fill as number) + 10} $c={GREEN} />
          </SubMini>
          {name}
        </SubRow>
      ))}
    </SubMenu>
  </Menu>
);

/* channel data */

type ChannelData = {
  title: string;
  color: string;
  devices: Device[];
  inName: string;
  inColor: string;
  outName: string;
  outColor: string;
  monitor: "On" | "Auto" | "Off";
  reverb: number;
  delay: number;
  peak: string;
  hot?: boolean;
  vol: string;
  k1: [string, string, KnobArc, boolean?];
  k2: [string, string, KnobArc];
  mode: string;
  meter: MeterData[];
  arrow: number;
  trackDelay: string;
  trackFill: number;
  ab?: "A" | "B";
  menu?: boolean;
  underSub?: boolean;
};

const PLUS: [number, number] = [0, 100];
const BAL: [number, number] = [-32, -6];
const WID: [number, number] = [-135, -112];
const LEFT: [number, number] = [0, 112];

const CHANNELS: ChannelData[] = [
  {
    title: "DRUMS",
    color: COLORS.drums,
    devices: [
      { name: "Flanger" },
      { name: "Compressor", mini: [70, 60] },
      { graph: "eqCurve" },
      { graph: "dialLeft" },
      { name: "Chorus", dot: DOT_OFF, bars: [28], barW: 75 },
    ],
    inName: "Keyboard",
    inColor: COLORS.voc,
    outName: "Lead Synth",
    outColor: COLORS.drums,
    monitor: "On",
    reverb: 30,
    delay: 30,
    peak: "1.17",
    vol: "-1.7",
    k1: ["Left", "49 R", PLUS],
    k2: ["Right", "10 L", BAL],
    mode: "Pan",
    meter: [
      { fill: 594, dim: 570, warm: true, hold: 558, holdC: "#e06a10" },
      { fill: 623, dim: 601, hold: 544, holdC: RED },
    ],
    arrow: 692,
    trackDelay: "1.2",
    trackFill: 18,
  },
  {
    title: "TV NOISE",
    color: COLORS.tv,
    devices: [
      { name: "Auto Pan", bars: [42, 65] },
      { name: "Reverb", dot: DOT_OFF },
      { graph: "blob" },
    ],
    inName: "All Ins",
    inColor: COLORS.b,
    outName: "Master",
    outColor: COLORS.master,
    monitor: "Auto",
    reverb: 80,
    delay: 67,
    peak: "-23.3",
    vol: "-28.3",
    k1: ["Left", "50 R", LEFT, true],
    k2: ["Right", "11 L", BAL],
    mode: "Pan",
    meter: [
      { fill: 659, dim: 635, hold: 646 },
      { fill: 681, dim: 634, hold: 634 },
    ],
    arrow: 593,
    trackDelay: "0",
    trackFill: 0,
    ab: "A",
  },
  {
    title: "SAW",
    color: COLORS.saw,
    devices: [
      { name: "VST" },
      { name: "Spring Reverb", bars: [63], barW: 74 },
      { name: "Audio Rack", up: true },
      { name: "Chain 1", dot: CYAN, italic: true },
      { name: "Chain 2", dot: CYAN, italic: true },
      { name: "COMP", dot: RED, mini: [100, 100], miniColor: RED },
    ],
    inName: "",
    inColor: COLORS.nnd,
    outName: "",
    outColor: COLORS.master,
    monitor: "Auto",
    reverb: 30,
    delay: 30,
    peak: "",
    vol: "",
    k1: ["", "33%", [-135, -105]],
    k2: ["Balance", "10 L", BAL],
    mode: "Bal",
    meter: [{ fill: 600 }, { fill: 600 }],
    arrow: 651,
    trackDelay: "0.2",
    trackFill: 8,
    ab: "B",
    menu: true,
  },
  {
    title: "VOC",
    color: COLORS.voc,
    devices: [{ graph: "voc" }],
    inName: "Ext. In",
    inColor: COLORS.nnd,
    outName: "Master",
    outColor: COLORS.master,
    monitor: "Auto",
    reverb: 30,
    delay: 30,
    peak: "1.17",
    hot: true,
    vol: "-3.22",
    k1: ["Width", "32%", WID],
    k2: ["Balance", "0", null],
    mode: "Bal",
    meter: [
      { fill: 716, dim: 623, hold: 604 },
      { fill: 623, dim: 585, hold: 608 },
    ],
    arrow: 593,
    trackDelay: "0",
    trackFill: 0,
    ab: "A",
    underSub: true,
  },
  {
    title: "LEAD SYNTH",
    color: COLORS.lead,
    devices: [
      { name: "Distorzion", bars: [74], barW: 75 },
      { graph: "dialRight" },
      { name: "3 Band EQ", mini: [60, 30, 70], miniColor: CYAN },
      { name: "Filter", dot: DOT_OFF, filter: "low" },
      { graph: "lead" },
    ],
    inName: "All Ins",
    inColor: COLORS.b,
    outName: "Group 4",
    outColor: COLORS.lead,
    monitor: "Auto",
    reverb: 30,
    delay: 30,
    peak: "-1.0",
    vol: "-24.8",
    k1: ["Width", "30%", WID],
    k2: ["Balance", "9 L", BAL],
    mode: "Bal",
    meter: [
      { fill: 623, dim: 570, warm: true, hold: 558, holdC: "#e06a10" },
      { fill: 623, dim: 601, hold: 562, holdC: YELLOW },
    ],
    arrow: 731,
    trackDelay: "0",
    trackFill: 0,
  },
  {
    title: "MASSIVE BASS",
    color: COLORS.massive,
    devices: [
      { name: "NI Massive" },
      { name: "Delay", dot: DOT_OFF },
      { name: "Limiter", mini: [70, 30] },
    ],
    inName: "All Ins",
    inColor: COLORS.b,
    outName: "Master",
    outColor: COLORS.master,
    monitor: "On",
    reverb: 80,
    delay: 33,
    peak: "-13.1",
    vol: "-13.3",
    k1: ["Left", "50 R", LEFT, true],
    k2: ["Right", "0", null],
    mode: "Pan",
    meter: [
      { fill: 740, dim: 724, hold: 708 },
      { fill: 731, hold: 708 },
    ],
    arrow: 575,
    trackDelay: "0",
    trackFill: 0,
  },
  {
    title: "PERCUSSIONS",
    color: COLORS.perc,
    devices: [
      { graph: "polar" },
      { name: "Reverb" },
      { name: "Exciter", dot: DOT_OFF },
      { graph: "spectrum" },
    ],
    inName: "Ext. In",
    inColor: COLORS.nnd,
    outName: "Master",
    outColor: COLORS.master,
    monitor: "Off",
    reverb: 30,
    delay: 30,
    peak: "-2.3",
    vol: "-11.0",
    k1: ["Left", "0", null],
    k2: ["Right", "0", null],
    mode: "Pan",
    meter: [
      { fill: 810, dim: 767, hold: 779 },
      { fill: 816, dim: 749, hold: 722 },
    ],
    arrow: 547,
    trackDelay: "0",
    trackFill: 0,
  },
  {
    title: "NNDMLSVC",
    color: COLORS.nnd,
    devices: [
      { name: "Golden Reve..." },
      { name: "Filter", filter: "high" },
      { name: "Freq Shifter", bars: [62, 20] },
      { name: "Vocoder" },
      { name: "Looper" },
    ],
    inName: "All Ins",
    inColor: COLORS.b,
    outName: "Group 4",
    outColor: COLORS.lead,
    monitor: "Auto",
    reverb: 80,
    delay: 33,
    peak: "1.75",
    hot: true,
    vol: "-8.3",
    k1: ["Left", "49R", LEFT],
    k2: ["Right", "11 L", BAL],
    mode: "Pan",
    meter: [
      { fill: 594, dim: 570, warm: true, hold: 557, holdC: "#e06a10" },
      { fill: 623, dim: 601, hold: 560, holdC: "#e06a10" },
    ],
    arrow: 645,
    trackDelay: "4.3",
    trackFill: 30,
  },
];

const MONITOR_DOT = { On: GREEN, Auto: YELLOW, Off: "#777" };

const DeviceList = ({ devices, pad }: { devices: Device[]; pad?: number }) => {
  const used = devices.reduce((n, d) => n + ("graph" in d ? 2 : 1), 0);
  return (
    <DeviceGrid>
      {devices.map((d, i) => (
        <DeviceView key={i} d={d} pad={pad} />
      ))}
      {Array.from({ length: 7 - used }, (_, i) => (
        <DeviceCell key={i} $empty />
      ))}
    </DeviceGrid>
  );
};

const Dropdown = ({ label, mt }: { label: React.ReactNode; mt: number }) => (
  <ValueBox $mt={mt}>
    <SmallCaretGap>
      {label}
      <Caret />
    </SmallCaretGap>
  </ValueBox>
);

const TrackSelect = ({ mt, w, tag, name, dot }: { mt: number; w: number; tag?: string; name: string; dot?: string }) => (
  <Select $mt={mt} $w={w}>
    {tag && <ColorTag $c={tag} />}
    {dot && <SelectDot $c={dot} />}
    {name}
    <SelectEnd>
      <Caret />
    </SelectEnd>
  </Select>
);

const PeakVol = ({ peak, vol, hot, peakLabel = "Peak", volLabel = "Vol" }: { peak: string; vol: string; hot?: boolean; peakLabel?: string; volLabel?: string }) => (
  <>
    <SmallLabel>{peakLabel}</SmallLabel>
    <ValueBox $mt={4} $hot={hot}>{peak}</ValueBox>
    <SmallLabel $mt={10}>{volLabel}</SmallLabel>
    <ValueBox $mt={3}>{vol}</ValueBox>
  </>
);

const Channel = ({ c }: { c: ChannelData }) => {
  // labels that sit under the routing menu are left out, the menu covers them anyway
  const shown = (s: string) => (c.menu ? "" : s);
  return (
    <ChannelBox $w={106.600}>
      <Strip $c={c.color} $h={4} />
      <Header $pad={10}>{c.title}</Header>
      <DeviceList devices={c.devices} />
      <Routing $pad={10}>
        <SmallLabel>In</SmallLabel>
        <TrackSelect mt={4} w={84} tag={c.inColor} name={c.inName} />
        <SmallLabel $mt={9}>{shown("Out")}</SmallLabel>
        <TrackSelect mt={4} w={84} tag={c.outColor} name={c.outName} />
        <SmallLabel $mt={11}>{shown("Monitor")}</SmallLabel>
        <TrackSelect mt={2} w={84} dot={MONITOR_DOT[c.monitor]} name={shown(c.monitor)} />
      </Routing>
      <Sends $pad={10}>
        <SendCol>
          <SmallLabel>{c.underSub ? "" : shown("Reverb")}</SmallLabel>
          <Bar w={36} pct={c.reverb} c={GREEN} bg="#3a3a3a" />
        </SendCol>
        <SendCol>
          <SmallLabel>{shown("Delay")}</SmallLabel>
          <Bar w={36} pct={c.delay} c={GREEN} bg="#3a3a3a" />
        </SendCol>
      </Sends>
      <Levels $pad={10} $gap={14}>
        <Controls $w={36}>
          <PeakVol
            peak={c.peak}
            vol={c.vol}
            hot={c.hot}
            peakLabel={c.underSub ? "" : shown("Peak")}
            volLabel={shown("Vol")}
          />
          <SmallLabel $mt={10}>{c.k1[0]}</SmallLabel>
          <Knob mt={1} arc={c.k1[2]} dot={c.k1[3]} />
          <SmallLabel $mt={-3}>{c.k1[1]}</SmallLabel>
          <SmallLabel $mt={6}>{c.k2[0]}</SmallLabel>
          <Knob mt={2} arc={c.k2[2]} />
          <SmallLabel $mt={-3}>{c.k2[1]}</SmallLabel>
          <Dropdown label={c.mode} mt={9} />
          <NumBox $mt={11} $h={27}>{CHANNELS.indexOf(c) + 1}</NumBox>
          <ValueBox $mt={11}>S</ValueBox>
          <ValueBox $mt={9}>
            <RecDisc />
          </ValueBox>
        </Controls>
        <MeterGroup>
          <Meter bars={c.meter} top={525} h={347} />
          <Scale arrow={c.arrow} />
        </MeterGroup>
      </Levels>
      <DelayBand $pad={10} $r={11}>
        <DelayHead>
          Track Delay
          <VDots />
        </DelayHead>
        <DelayBarRow>
          <Bar w={64} pct={c.trackFill} c={CYAN} />
          {c.trackDelay}
        </DelayBarRow>
      </DelayBand>
      <ABRow $pad={10}>
        <ABBtn $on={c.ab === "A"}>A</ABBtn>
        <ABBtn $on={c.ab === "B"}>B</ABBtn>
      </ABRow>
      <Strip $c={c.color} $h={5} />
      {c.menu && <RoutingMenu />}
    </ChannelBox>
  );
};

const ScaleA = styled.div`
  position: relative;
  width: 0;
`;

const ChannelA = () => (
  <ChannelBox $w={35}>
    <Strip $c={COLORS.a} $h={4} />
    <Header $pad={14}>A</Header>
    <DeviceList devices={[{ name: "R" }, { name: "E" }]} pad={7} />
    <Routing $pad={8}>
      <SmallLabel $mt={43}>Out</SmallLabel>
      <Select $mt={4} $w={20}>
        <ColorTag $c={COLORS.lead} />
        <SelectEnd>
          <Caret />
        </SelectEnd>
      </Select>
    </Routing>
    <Sends $pad={8}>
      <StackedSends>
        <Bar w={20} pct={45} c={GREEN} />
        <Bar w={20} pct={75} c={GREEN} />
      </StackedSends>
    </Sends>
    <Levels $pad={8} $gap={0}>
      <Controls $w={20}>
        <PeakVol peak="-2" vol="-9" />
        <Meter
          mt={10}
          top={609}
          h={172}
          w={5}
          bars={[
            { fill: 672, dim: 652, hold: 644 },
            { fill: 703, dim: 668, hold: 659 },
          ]}
        />
        <NumBox $mt={11} $h={27}>A</NumBox>
        <ValueBox $mt={11}>S</ValueBox>
      </Controls>
      <ScaleA>
        <FaderArrow $top={653 - 515} $left={-7} />
      </ScaleA>
    </Levels>
    <DelayBand $pad={8} $r={7}>
      <SmallLabel $center>Del</SmallLabel>
      <DelayBarRow>
        <Bar w={20} pct={42} c={CYAN} />
      </DelayBarRow>
    </DelayBand>
    <ABRow $pad={8}>
      <ABBtn $w={20}>
        <Caret />
      </ABBtn>
    </ABRow>
    <Strip $c={COLORS.a} $h={5} />
  </ChannelBox>
);

const ChannelB = () => (
  <ChannelBox $w={85.500}>
    <Strip $c={COLORS.b} $h={4} />
    <Header $pad={8}>B | Delay</Header>
    <DeviceList devices={[{ name: "FLT DLY" }, { name: "Rev" }]} pad={8} />
    <Routing $pad={8}>
      <SmallLabel $mt={43}>Out</SmallLabel>
      <TrackSelect mt={4} w={70} tag={COLORS.master} name="Master" />
    </Routing>
    <Sends $pad={8}>
      <SendCol>
        <SmallLabel>Rever.</SmallLabel>
        <Bar w={32} pct={33} c={GREEN} />
      </SendCol>
      <SendCol>
        <SmallLabel>Delay</SmallLabel>
        <Bar w={30} pct={35} c={GREEN} />
      </SendCol>
    </Sends>
    <Levels $pad={8} $gap={9}>
      <Controls $w={36}>
        <PeakVol peak="-33.2" vol="-4.0" />
        <SmallLabel $mt={10}>Width</SmallLabel>
        <Knob mt={1} arc={[-135, 0]} />
        <SmallLabel $mt={-3}>100%</SmallLabel>
        <SmallLabel $mt={6}>Balance</SmallLabel>
        <Knob mt={2} arc={null} />
        <SmallLabel $mt={-3}>0</SmallLabel>
        <Dropdown label="Bal" mt={9} />
        <NumBox $mt={11} $h={27}>B</NumBox>
        <ValueBox $mt={11}>S</ValueBox>
      </Controls>
      <MeterGroup>
        <Meter
          top={525}
          h={347}
          bars={[
            { fill: 803, dim: 779, hold: 773 },
            { fill: 789, dim: 778, hold: 778 },
          ]}
        />
        <Scale arrow={616} left={0} labels={false} />
      </MeterGroup>
    </Levels>
    <DelayBand $pad={8} $r={7}>
      <DelayHead>Track Delay</DelayHead>
      <DelayBarRow>
        <Bar w={50} pct={22} c={CYAN} />
        2.9
      </DelayBarRow>
    </DelayBand>
    <ABRow $pad={8}>
      <ABBtn $w={31}>A</ABBtn>
      <ABBtn $w={31}>B</ABBtn>
    </ABRow>
    <Strip $c={COLORS.b} $h={5} />
  </ChannelBox>
);

const MasterChannel = () => (
  <ChannelBox $w={107}>
    <Strip $c={COLORS.master} $h={4} />
    <Header $pad={11}>MASTER</Header>
    <DeviceList devices={[{ graph: "master" }, { name: "Limiter", mini: [100, 100] }]} pad={8} />
    <Routing $pad={11}>
      <SmallLabel>Cue Out</SmallLabel>
      <Select $mt={3} $w={84}>
        <GreenPair><i /><i /></GreenPair>
        1/2
        <SelectEnd><Caret /></SelectEnd>
      </Select>
      <SmallLabel $mt={11}>Master Out</SmallLabel>
      <Select $mt={2} $w={84}>
        <GreenPair><i /><i /></GreenPair>
        1/2
        <SelectEnd><Caret /></SelectEnd>
      </Select>
    </Routing>
    <Sends $pad={11}>
      <MasterSends>
        <PrePost $on>Pre</PrePost>
        <PrePost>Post</PrePost>
      </MasterSends>
    </Sends>
    <Levels $pad={11} $gap={13}>
      <Controls $w={36}>
        <PeakVol peak="-0.2" vol="0.0" />
        <SmallLabel $mt={10}>Width</SmallLabel>
        <Knob mt={1} arc={[-135, 0]} />
        <SmallLabel $mt={-3}>100%</SmallLabel>
        <SmallLabel $mt={6}>Balance</SmallLabel>
        <Knob mt={2} arc={null} />
        <SmallLabel $mt={-3}>0</SmallLabel>
        <Dropdown label="Bal" mt={9} />
        <ValueBox $mt={9}>Solo</ValueBox>
        <SmallLabel $mt={4}>Cue</SmallLabel>
        <Knob mt={-6} arc={[-135, 100]} color={CYAN} />
        <SmallLabel $mt={-5}>0.0 dB</SmallLabel>
      </Controls>
      <MeterGroup>
        <Meter
          top={525}
          h={347}
          bars={[
            { fill: 611, dim: 570, warm: true, hold: 564 },
            { fill: 605, dim: 576, warm: true, hold: 568 },
          ]}
        />
        <Scale arrow={564} left={9} />
      </MeterGroup>
    </Levels>
    <DelayBand $pad={12} $r={15}>
      <DelayHead>
        Track Delay
        <VDots />
      </DelayHead>
      <DelayBarRow>
        <Bar w={62} pct={0} c={CYAN} />
        0
      </DelayBarRow>
    </DelayBand>
    <ABRow $pad={11}>
      <CrossFader>
        <CrossSpan />
        <CrossTop />
        <CrossBottom />
      </CrossFader>
    </ABRow>
    <Strip $c={COLORS.master} $h={5} />
  </ChannelBox>
);

const Mixer = styled.div`
  flex: 1;
  display: flex;
  background: #2a2a2a;
`;

const ChannelRun = styled.div<{ $gap: number }>`
  display: flex;
  gap: ${({ $gap }) => $gap}px;
`;

const DropArea = styled.div`
  width: 152px;
  flex: none;
  display: flex;
  justify-content: center;
  padding-top: 248px;
  background: #343434;
  border-top: 4px solid #2a2a2a;
`;

const DropBox = styled.div`
  width: 132px;
  height: 100px;
  display: flex;
  flex-direction: column;
  align-items: center;
  padding-top: 24px;
  gap: 8px;
  border: 1px dashed #5c5c5c;
  border-radius: 3px;
  color: #5e5e5e;
  text-align: center;
  line-height: 16px;
`;

const StatusBar = styled.div`
  height: 36px;
  display: flex;
  align-items: center;
  padding-left: 7px;
  background: ${BLACK};
  color: #c2c2c2;
  letter-spacing: 0;
  white-space: nowrap;
`;

const StatusItem = styled.span<{ $ml: number; $c?: string }>`
  margin-left: ${({ $ml }) => $ml}px;
  color: ${({ $c }) => $c ?? "inherit"};
`;

const WorkspaceSelect = styled.div`
  width: 79px;
  height: 16px;
  margin-left: 13px;
  display: flex;
  align-items: center;
  justify-content: space-between;
  padding: 0 6px 0 5px;
  background: #333;
`;

const BarSlot = styled.div<{ $ml: number }>`
  margin-left: ${({ $ml }) => $ml}px;
  display: flex;
`;

export default function App() {
  return (
    <Page>
      <GlobalStyle />
      <TopBarSection />
      <Tabs />
      <Main>
        <SidebarSection />
        <Mixer>
          <ChannelRun $gap={1}>
            {CHANNELS.map(c => (
              <Channel key={c.title} c={c} />
            ))}
          </ChannelRun>
          <DropArea>
            <DropBox>
              <Ico $c="#666" width="16" height="14" viewBox="0 0 16 14" fill="none" stroke="currentColor" strokeWidth="1.200">
                <rect x=".6" y=".6" width="14.800" height="12.800" />
                <path d="M.6 10h14.800" />
              </Ico>
              <span>
                Drop files and
                <br />
                devices here
              </span>
            </DropBox>
          </DropArea>
          <ChannelRun $gap={1.500}>
            <ChannelA />
            <ChannelB />
            <MasterChannel />
          </ChannelRun>
        </Mixer>
      </Main>
      <StatusBar>
        <Grip />
        <PlayDisc $dim />
        <StatusItem $ml={9}>Workspace</StatusItem>
        <WorkspaceSelect>
          Essentials
          <Caret />
        </WorkspaceSelect>
        <StatusItem $ml={24}>Display Zoom</StatusItem>
        <BarSlot $ml={9}>
          <Bar w={53} pct={52} c={CYAN} bg="#333" />
        </BarSlot>
        <StatusItem $ml={23}>Detail Level</StatusItem>
        <BarSlot $ml={12}>
          <Bar w={53} pct={84} c={CYAN} bg="#333" />
        </BarSlot>
        <StatusItem $ml={22}>Latency: 44 samples (1ms)</StatusItem>
        <StatusItem $ml={9} $c="#7a7a7a">
          Redesign by Nenad Milosevic http://nenadmilosevic.co/
        </StatusItem>
      </StatusBar>
    </Page>
  );
}
